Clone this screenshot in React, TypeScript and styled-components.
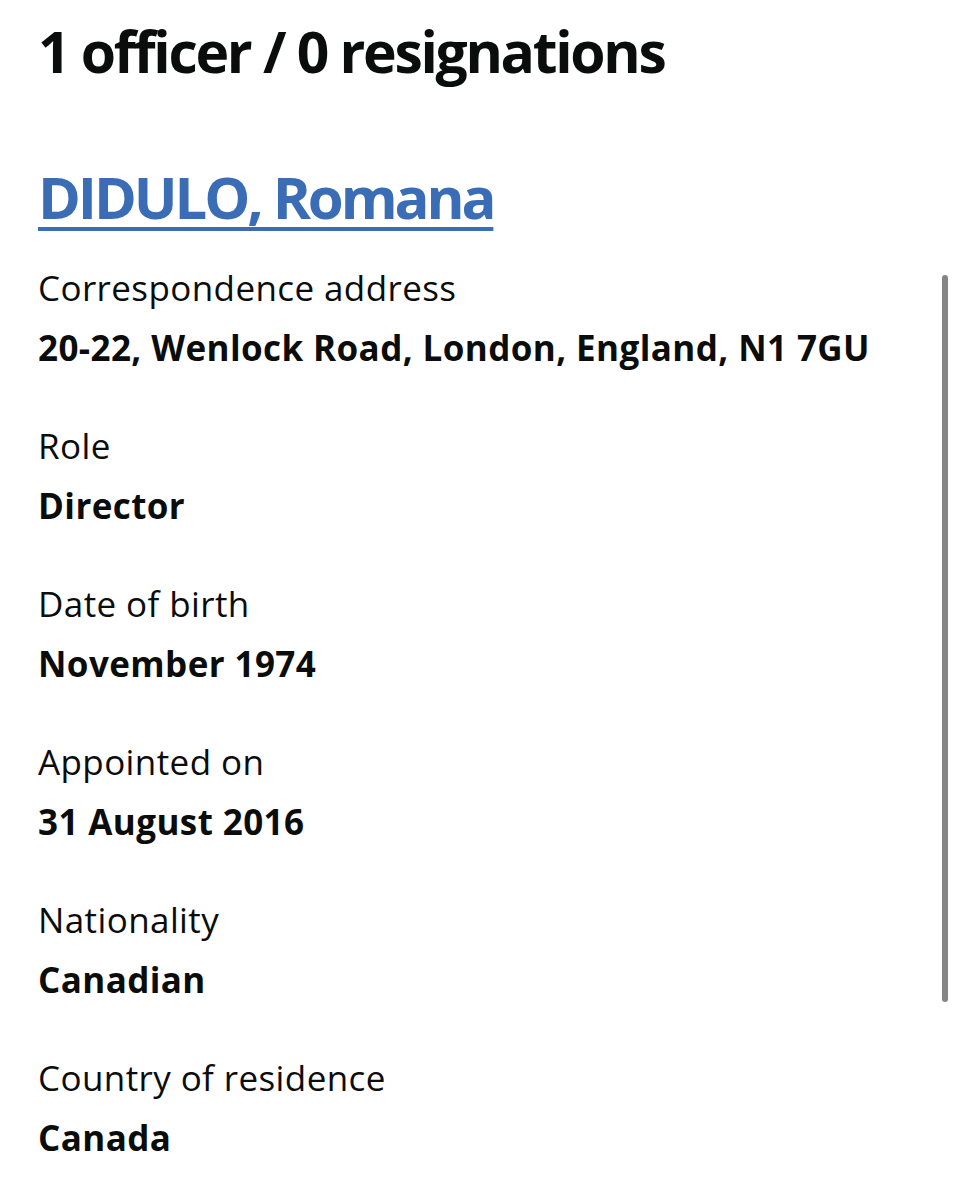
import styled, { createGlobalStyle } from 'styled-components'

const GlobalStyle = createGlobalStyle`
  html, body {
    margin: 0;
    padding: 0;
    background: #ffffff;
  }
  body {
    font-family: "Open Sans", "Liberation Sans", Arial, sans-serif;
    color: #0b0c0c;
  }
`

const Page = styled.main`
  padding: 11px 0 40px 38px;
`

const CountHeading = styled.h1`
  margin: 0;
  font-size: 57px;
  line-height: 80px;
  font-weight: 700;
  letter-spacing: -2.3px;
`

const OfficerName = styled.h2`
  margin: 66px 0 0;
  font-size: 58px;
  line-height: 80px;
  font-weight: 700;
`

const OfficerLink = styled.a`
  color: #3a6db5;
  text-decoration: underline;
  text-decoration-thickness: 4px;
  text-underline-offset: 8px;
  letter-spacing: -3.1px;
`

const DetailList = styled.dl`
  margin: 27px 0 0;
`

const Label = styled.dt`
  margin: 0;
  font-size: 35px;
  line-height: 48px;
  font-weight: 400;
  letter-spacing: 0.4px;
`

const Value = styled.dd`
  margin: 12px 0 50px;
  font-size: 35px;
  line-height: 48px;
  font-weight: 700;
  letter-spacing: 0.4px;
`

const ScrollThumb = styled.div`
  position: fixed;
  top: 275px;
  right: 9px;
  width: 6px;
  height: 727px;
  border-radius: 3px;
  background: #858585;
`

const details = [
  { label: 'Correspondence address', value: '20-22, Wenlock Road, London, England, N1 7GU' },
  { label: 'Role', value: 'Director' },
  { label: 'Date of birth', value: 'November 1974' },
  { label: 'Appointed on', value: '31 August 2016' },
  { label: 'Nationality', value: 'Canadian' },
  { label: 'Country of residence', value: 'Canada' },
]

const App: React.FC = () => {
  return (
    <>
      <GlobalStyle />
      <Page>
        <CountHeading>1 officer / 0 resignations</CountHeading>
        <OfficerName>
          <OfficerLink href="#">DIDULO, Romana</OfficerLink>
        </OfficerName>
        <DetailList>
          {details.map((d) => (
            <div key={d.label}>
              <Label>{d.label}</Label>
              <Value>{d.value}</Value>
            </div>
          ))}
        </DetailList>
      </Page>
      <ScrollThumb />
    </>
  )
}

export default App
